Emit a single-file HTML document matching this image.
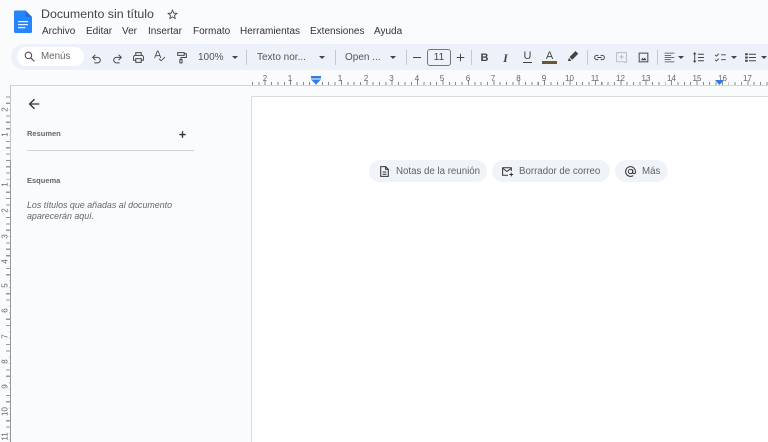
<!DOCTYPE html>
<html lang="es"><head><meta charset="utf-8"><title>Documento sin título</title>
<style>
html,body{margin:0;padding:0;width:768px;height:442px;overflow:hidden}
#w{position:relative;width:768px;height:442px;overflow:hidden;background:#f9fbfd;font-family:"Liberation Sans",sans-serif;color:#444746}
.a{position:absolute;white-space:nowrap}
.m{top:25.500px;font-size:10px;line-height:12px;color:#333}
.t{top:51.500px;font-size:10px;line-height:12px;color:#555}
.sep{position:absolute;top:50px;width:1px;height:15px;background:#c7c9cc}
.car{position:absolute;top:55.5px;width:0;height:0;border-left:3px solid transparent;border-right:3px solid transparent;border-top:3px solid #444}
svg.i{position:absolute;width:13px;height:13px;fill:none;stroke:#444;stroke-width:1.800}
.h{position:absolute;top:74px;font-size:8px;line-height:9px;width:14px;text-align:center;color:#666}
.v{position:absolute;left:0;width:10px;text-align:center;font-size:8px;line-height:9px;color:#666;transform:rotate(-90deg);background:#f9fbfd}
.chip{position:absolute;top:160px;height:22px;border-radius:11px;background:#f0f4f9;font-size:9.700px;line-height:23px;color:#5f6368}
.chip span{position:absolute;white-space:nowrap}
.chip svg{position:absolute;top:4.500px;width:13px;height:13px;fill:none;stroke:#333;stroke-width:1.900}
.s{font-size:7.500px;line-height:10px;color:#666;font-weight:bold;left:27px}
</style></head><body><div id="w">

<!-- logo -->
<svg class="a" style="left:14px;top:10px" width="18" height="24" viewBox="0 0 18 24"><path d="M1.500 0.500H11.500L18 7V21.500A1.500 1.500 0 0 1 16.500 23H1.500A1.500 1.500 0 0 1 0 21.500V2A1.500 1.500 0 0 1 1.500 .5Z" fill="#2684fc"/><path d="M11.500 .5 18 7H13A1.500 1.500 0 0 1 11.500 5.500Z" fill="#1a6fe0"/><path d="M4 11h10v1.200H4zM4 14h10v1.200H4zM4 17h7.500v1.200H4z" fill="#e8f0fe"/></svg>

<div class="a" style="left:41px;top:6px;font-size:12.400px;line-height:16px;color:#444">Documento sin título</div>
<svg class="a" style="left:166px;top:8px" width="13" height="13" viewBox="0 0 24 24"><path fill="#444" d="M22 9.240l-7.190-.62L12 2 9.190 8.630 2 9.240l5.460 4.730L5.820 21 12 17.270 18.180 21l-1.630-7.030L22 9.240zM12 15.400l-3.760 2.270 1-4.280-3.320-2.880 4.380-.38L12 6.100l1.710 4.040 4.380.38-3.320 2.880 1 4.280L12 15.400z"/></svg>

<div class="a m" style="left:42px">Archivo</div>
<div class="a m" style="left:86px">Editar</div>
<div class="a m" style="left:122px">Ver</div>
<div class="a m" style="left:148px">Insertar</div>
<div class="a m" style="left:193px">Formato</div>
<div class="a m" style="left:240px">Herramientas</div>
<div class="a m" style="left:310px">Extensiones</div>
<div class="a m" style="left:374px">Ayuda</div>

<!-- toolbar -->
<div class="a" style="left:11px;top:44px;width:770px;height:26px;background:#edf2fa;border-radius:13px"></div>
<div class="a" style="left:17px;top:47px;width:67px;height:19px;background:#fff;border-radius:10px"></div>
<svg class="i" style="left:22.500px;top:50px" viewBox="0 0 24 24"><circle cx="10" cy="10" r="6"/><path d="M14.500 14.500 21 21"/></svg>
<div class="a" style="left:41px;top:50.500px;font-size:9.800px;line-height:12px;color:#666">Menús</div>

<svg class="i" style="left:89.500px;top:51.500px" viewBox="0 0 24 24"><path d="M10 5 5 10l5 5"/><path d="M5 10h9a5 5 0 0 1 0 10H8"/></svg>
<svg class="i" style="left:110.500px;top:51.500px" viewBox="0 0 24 24"><path d="M14 5l5 5-5 5"/><path d="M19 10h-9a5 5 0 0 0 0 10h6"/></svg>
<svg class="i" style="left:132px;top:50.500px" viewBox="0 0 24 24"><path d="M7 8V3h10v5"/><path d="M7 17H3v-6a3 3 0 0 1 3-3h12a3 3 0 0 1 3 3v6h-4"/><path d="M7 14h10v7H7z"/></svg>
<svg class="i" style="left:153px;top:50px;stroke-width:1.500" viewBox="0 0 24 24"><path d="M3 15 8 2h1.500l5 13M5 10.500h7.500"/><path d="M11 16l4 4 7-7"/></svg>
<svg class="i" style="left:174.500px;top:50.500px" viewBox="0 0 24 24"><path d="M5 3h12v5H5z"/><path d="M17 5h4v7H11v4"/><path d="M9 16h4v6H9z"/></svg>
<div class="a t" style="left:198px">100%</div><div class="car" style="left:232px"></div>
<div class="sep" style="left:246px"></div>
<div class="a t" style="left:257px">Texto nor...</div><div class="car" style="left:319px"></div>
<div class="sep" style="left:334.500px"></div>
<div class="a t" style="left:345px">Open ...</div><div class="car" style="left:390px"></div>
<div class="sep" style="left:406px"></div>
<div class="a" style="left:413px;top:56.500px;width:8px;height:1.200px;background:#444"></div>
<div class="a" style="left:427px;top:49px;width:22px;height:15px;border:1px solid #777;border-radius:3px;text-align:center;font-size:10px;line-height:15px;color:#444">11</div>
<svg class="i" style="left:453.500px;top:50.500px" viewBox="0 0 24 24"><path d="M12 5v14M5 12h14"/></svg>
<div class="sep" style="left:471px"></div>
<div class="a" style="left:479px;top:51.500px;width:11px;text-align:center;font-size:11px;line-height:12px;font-weight:bold;color:#444">B</div>
<div class="a" style="left:500px;top:51.500px;width:11px;text-align:center;font-size:12px;line-height:12px;font-weight:bold;font-style:italic;color:#444;font-family:'Liberation Serif',serif">I</div>
<div class="a" style="left:522px;top:50px;width:11px;text-align:center;font-size:11px;line-height:12px;color:#444">U</div>
<div class="a" style="left:523px;top:62px;width:9px;height:1px;background:#444"></div>
<div class="a" style="left:544px;top:49.500px;width:11px;text-align:center;font-size:11px;line-height:12px;color:#444">A</div>
<div class="a" style="left:542px;top:61px;width:15px;height:2.500px;background:#6b5635"></div>
<svg class="a" style="left:567px;top:50px" width="12" height="12" viewBox="0 0 24 24"><path fill="#444" d="M17 2 22.500 7.500 10.500 19.500 5 14zM4 16l4.500 4.500-2 1.500H1.500z"/></svg>
<div class="sep" style="left:586.500px"></div>
<svg class="i" style="left:592.500px;top:50.500px" viewBox="0 0 24 24"><path d="M10 8H7a4 4 0 0 0 0 8h3M14 8h3a4 4 0 0 1 0 8h-3M8 12h8"/></svg>
<svg class="i" style="left:614.500px;top:50.500px;stroke:#b4b9bd;stroke-width:1.700" viewBox="0 0 24 24"><path d="M3 3h18v18h-3l-1-1H3zM12 7v8M8 11h8"/></svg>
<svg class="i" style="left:636.500px;top:50.500px" viewBox="0 0 24 24"><path d="M4 4h16v16H4z"/><path fill="#444" stroke="none" d="M7 17l3.500-4.500 2 2.500 2-3 3 5z"/></svg>
<div class="sep" style="left:657px"></div>
<svg class="i" style="left:662.500px;top:50.500px;stroke-width:1.400" viewBox="0 0 24 24"><path d="M3 4h18M3 8h12M3 12h18M3 16h12M3 20h18"/></svg><div class="car" style="left:678px"></div>
<svg class="i" style="left:691.500px;top:50.500px;stroke-width:1.800" viewBox="0 0 24 24"><path d="M11 6h11M11 12h11M11 18h11M5 5v14"/><path fill="#444" stroke="none" d="M5 2l3.500 4h-7zM5 22l3.500-4h-7z"/></svg>
<svg class="i" style="left:713.500px;top:50.500px;stroke-width:1.700" viewBox="0 0 24 24"><path d="M2 7l2.500 2.500L9 5M2 16l2.500 2.500L9 14M13 7h9M13 16h9"/></svg><div class="car" style="left:731px"></div>
<svg class="i" style="left:743.500px;top:50.500px;stroke-width:1.800" viewBox="0 0 24 24"><path d="M9 6h13M9 12h13M9 18h13M3 5h3v2H3zM3 11h3v2H3zM3 17h3v2H3z"/></svg><div class="car" style="left:761px"></div>

<!-- horizontal ruler -->
<div class="a" style="left:10px;top:85px;width:758px;height:1px;background:#d3d5d8"></div>
<div class="a" style="left:251px;top:82px;width:517px;height:3px;background:repeating-linear-gradient(90deg,transparent 0,transparent 1px,#888 1px,#888 2px,transparent 2px,transparent 6.350px)"></div>
<div class="a" style="left:251px;top:80px;width:517px;height:2px;background:repeating-linear-gradient(90deg,transparent 0,transparent 13.700px,#888 13.700px,#888 14.700px,transparent 14.700px,transparent 25.400px)"></div>
<div class="h" style="left:258px">2</div><div class="h" style="left:283px">1</div>
<div class="h" style="left:333px">1</div><div class="h" style="left:359px">2</div><div class="h" style="left:384.500px">3</div><div class="h" style="left:410px">4</div><div class="h" style="left:435px">5</div><div class="h" style="left:461px">6</div><div class="h" style="left:486px">7</div><div class="h" style="left:511.500px">8</div><div class="h" style="left:537px">9</div><div class="h" style="left:562.500px">10</div><div class="h" style="left:588px">11</div><div class="h" style="left:613.500px">12</div><div class="h" style="left:639px">13</div><div class="h" style="left:664.500px">14</div><div class="h" style="left:690px">15</div><div class="h" style="left:715.500px">16</div><div class="h" style="left:740.500px">17</div>
<svg class="a" style="left:311px;top:76px" width="10" height="9" viewBox="0 0 10 9"><path d="M0 0h10v2.500H0zM0 3.500h10L5 8.500z" fill="#2f7de1"/></svg>
<svg class="a" style="left:715px;top:80px" width="10" height="5" viewBox="0 0 10 5"><path d="M0 0h9L4.500 5z" fill="#2f7de1"/></svg>

<!-- vertical ruler -->
<div class="a" style="left:10px;top:86px;width:1px;height:74px;background:#c4c6c9"></div>
<div class="a" style="left:10px;top:160px;width:1px;height:282px;background:#999"></div>
<div class="a" style="left:6px;top:96px;width:4px;height:346px;background:repeating-linear-gradient(180deg,transparent 0,transparent .3px,#999 .3px,#999 1.500px,transparent 1.500px,transparent 6.350px)"></div>
<div class="v" style="top:105px">2</div><div class="v" style="top:130px">1</div><div class="v" style="top:180px">1</div><div class="v" style="top:205.500px">2</div><div class="v" style="top:232px">3</div><div class="v" style="top:256.500px">4</div><div class="v" style="top:281px">5</div><div class="v" style="top:306px">6</div><div class="v" style="top:331.500px">7</div><div class="v" style="top:357px">8</div><div class="v" style="top:382px">9</div><div class="v" style="top:407px">10</div><div class="v" style="top:431.500px">11</div>

<!-- sidebar -->
<svg class="a" style="left:26px;top:96px" width="16" height="16" viewBox="0 0 24 24"><path fill="#333" d="M20 11H7.830l5.590-5.590L12 4l-8 8 8 8 1.410-1.410L7.830 13H20v-2z"/></svg>
<div class="a s" style="top:129px">Resumen</div>
<svg class="a" style="left:177px;top:129px" width="11" height="11" viewBox="0 0 24 24"><path fill="#333" d="M19 13.500h-5.500V19h-3v-5.500H5v-3h5.500V5h3v5.500H19z"/></svg>
<div class="a" style="left:27px;top:150px;width:167px;height:1px;background:#d0d2d5"></div>
<div class="a s" style="top:175.500px">Esquema</div>
<div class="a" style="left:27px;top:199.500px;font-size:8.900px;line-height:11.500px;font-style:italic;color:#666">Los títulos que añadas al documento<br>aparecerán aquí.</div>

<!-- page -->
<div class="a" style="left:251px;top:96px;width:530px;height:360px;background:#fff;border:1px solid #dadce0"></div>

<!-- chips -->
<div class="chip" style="left:369px;width:118px"><svg style="left:8.500px" viewBox="0 0 24 24"><path d="M5 3h9l5 5v13H5z"/><path d="M14 3v5h5M8.500 13h7M8.500 17h7"/></svg><span style="left:27px">Notas de la reunión</span></div>
<div class="chip" style="left:492px;width:118px"><svg style="left:8.500px" viewBox="0 0 24 24"><path d="M13 19H3V5h16v6"/><path d="M3 6l8 6 8-6"/><path d="M19 14v7M15.500 17.500h7"/></svg><span style="left:27px">Borrador de correo</span></div>
<div class="chip" style="left:615px;width:53px"><svg style="left:8.500px" viewBox="0 0 24 24"><circle cx="12" cy="12" r="4"/><path d="M16 8v5.500a2.500 2.500 0 0 0 5 0V12a9 9 0 1 0-4 7.500"/></svg><span style="left:27px">Más</span></div>
</div></body></html>
